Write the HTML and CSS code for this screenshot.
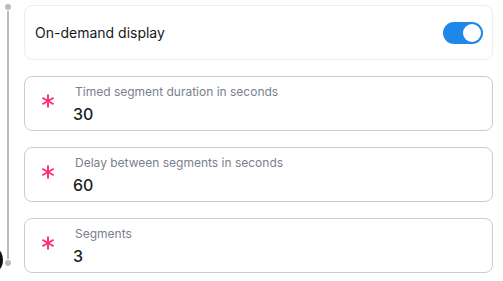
FILE: index.html
```html
<!DOCTYPE html>
<html lang="en">

<head>
    <meta charset="UTF-8">
    <meta name="viewport" content="width=device-width, initial-scale=1.0">
    <title>Segment settings</title>
    <link rel="stylesheet" href="styles.css">
</head>

<body>

    <div class="page">
        <div class="timeline">
            <span class="dot"></span>
            <span class="line"></span>
            <span class="dot"></span>
            <span class="marker"></span>
        </div>

        <div class="fields">
            <div class="card toggle-card">
                <span class="toggle-label">On-demand display</span>
                <span class="switch on"><span class="knob"></span></span>
            </div>

            <div class="card field">
                <svg class="required" viewBox="0 0 14 14" width="14" height="14">
                    <path d="M7 0.5V13.5M1.4 3.75L12.6 10.25M1.4 10.25L12.6 3.75" />
                </svg>
                <div class="field-body">
                    <span class="field-label">Timed segment duration in seconds</span>
                    <span class="field-value">30</span>
                </div>
            </div>

            <div class="card field">
                <svg class="required" viewBox="0 0 14 14" width="14" height="14">
                    <path d="M7 0.5V13.5M1.4 3.75L12.6 10.25M1.4 10.25L12.6 3.75" />
                </svg>
                <div class="field-body">
                    <span class="field-label">Delay between segments in seconds</span>
                    <span class="field-value">60</span>
                </div>
            </div>

            <div class="card field">
                <svg class="required" viewBox="0 0 14 14" width="14" height="14">
                    <path d="M7 0.5V13.5M1.4 3.75L12.6 10.25M1.4 10.25L12.6 3.75" />
                </svg>
                <div class="field-body">
                    <span class="field-label">Segments</span>
                    <span class="field-value">3</span>
                </div>
            </div>
        </div>
    </div>

</body>

</html>
```

FILE: styles.css
```css
body {
    font-family: Inter, 'Noto Sans', sans-serif;
    background-color: #fff;
    margin: 0;
    padding: 0;
}

.page {
    display: flex;
    padding-top: 5px;
    width: 493px;
}

.timeline {
    position: relative;
    width: 24px;
    display: flex;
    flex-direction: column;
    align-items: center;
    box-sizing: border-box;
    flex-shrink: 0;
    margin-left: -4px;
    margin-right: 4px;
}

.dot {
    width: 6px;
    height: 6px;
    border-radius: 50%;
    background-color: #b9bcc3;
    flex-shrink: 0;
}

.dot:first-child {
    margin-top: -1px;
}

.line {
    width: 2px;
    height: 248px;
    margin: 1px 0;
    background-color: #b9bcc3;
}

.marker {
    position: absolute;
    left: -4px;
    top: 245px;
    width: 11px;
    height: 20px;
    border-radius: 50%;
    background-color: #111;
}

.fields {
    flex: 1;
    display: flex;
    flex-direction: column;
    gap: 16px;
}

.card {
    height: 55px;
    box-sizing: border-box;
    border-radius: 8px;
    display: flex;
    align-items: center;
}

.toggle-card {
    border: 1px solid #eceef1;
    justify-content: space-between;
    padding: 0 9px 0 10px;
}

.toggle-label {
    font-size: 14px;
    color: #16181d;
}

.switch {
    width: 40px;
    height: 22px;
    border-radius: 11px;
    background-color: #1e88e8;
    display: flex;
    align-items: center;
    justify-content: flex-end;
    padding: 0 2px;
    box-sizing: border-box;
}

.knob {
    width: 18px;
    height: 18px;
    border-radius: 50%;
    background-color: #fff;
}

.field {
    border: 1px solid #c9cdd4;
    padding-left: 16px;
}

.required {
    flex-shrink: 0;
    margin-right: 18px;
    margin-bottom: 6px;
    fill: none;
    stroke: #ff2d7a;
    stroke-width: 2;
}

.field-body {
    display: flex;
    flex-direction: column;
    gap: 5px;
    padding-top: 1px;
}

.field-label {
    font-size: 12px;
    color: #7b808c;
    padding-left: 2px;
}

.field-value {
    font-size: 16px;
    color: #1b1d22;
    font-weight: 500;
}
```
